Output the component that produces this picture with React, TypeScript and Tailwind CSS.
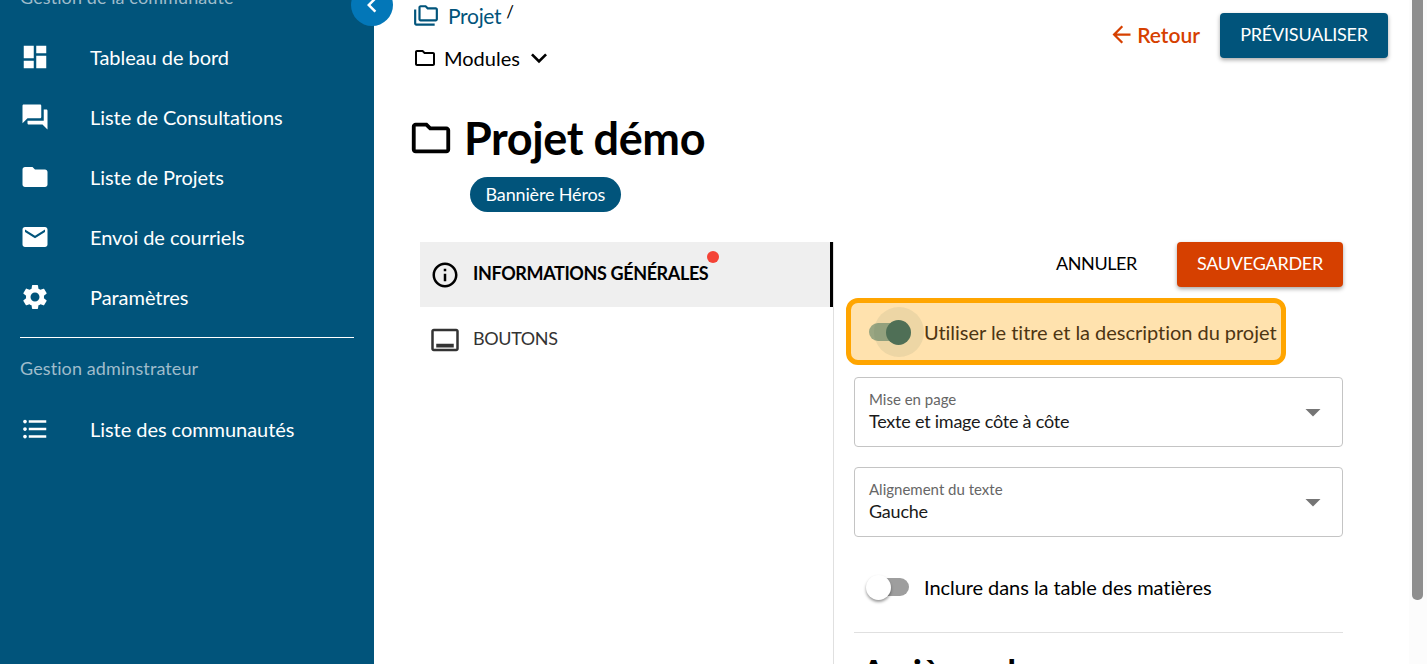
import type { ReactNode } from 'react';

const P = {
  dashboard: 'M3 13h8V3H3v10zm0 8h8v-6H3v6zm10 0h8V11h-8v10zm0-18v6h8V3h-8z',
  forum: 'M21 6h-2v9H6v2c0 .55.45 1 1 1h11l4 4V7c0-.55-.45-1-1-1zm-4 6V3c0-.55-.45-1-1-1H3c-.55 0-1 .45-1 1v14l4-4h10c.55 0 1-.45 1-1z',
  folder: 'M10 4H4c-1.1 0-1.99.9-1.99 2L2 18c0 1.1.9 2 2 2h16c1.1 0 2-.9 2-2V8c0-1.1-.9-2-2-2h-8l-2-2z',
  email: 'M20 4H4c-1.1 0-1.99.9-1.99 2L2 18c0 1.1.9 2 2 2h16c1.1 0 2-.9 2-2V6c0-1.1-.9-2-2-2zm0 4l-8 5-8-5V6l8 5 8-5v2z',
  settings: 'M19.14 12.94c.04-.3.06-.61.06-.94 0-.32-.02-.64-.07-.94l2.03-1.58c.18-.14.23-.41.12-.61l-1.92-3.32c-.12-.22-.37-.29-.59-.22l-2.39.96c-.5-.38-1.03-.7-1.62-.94l-.36-2.54c-.04-.24-.24-.41-.48-.41h-3.84c-.24 0-.43.17-.47.41l-.36 2.54c-.59.24-1.13.57-1.62.94l-2.39-.96c-.22-.08-.47 0-.59.22L2.74 8.87c-.12.21-.08.47.12.61l2.03 1.58c-.05.3-.09.63-.09.94s.02.64.07.94l-2.03 1.58c-.18.14-.23.41-.12.61l1.92 3.32c.12.22.37.29.59.22l2.39-.96c.5.38 1.03.7 1.62.94l.36 2.54c.05.24.24.41.48.41h3.84c.24 0 .44-.17.47-.41l.36-2.54c.59-.24 1.13-.56 1.62-.94l2.39.96c.22.08.47 0 .59-.22l1.92-3.32c.12-.22.07-.47-.12-.61l-2.01-1.58zM12 15.6c-1.98 0-3.6-1.62-3.6-3.6s1.62-3.6 3.6-3.6 3.6 1.62 3.6 3.6-1.62 3.6-3.6 3.6z',
  list: 'M4 10.5c-.83 0-1.5.67-1.5 1.5s.67 1.5 1.5 1.5 1.5-.67 1.5-1.5-.67-1.5-1.5-1.5zm0-6c-.83 0-1.5.67-1.5 1.5S3.17 7.5 4 7.5 5.5 6.83 5.5 6 4.83 4.5 4 4.5zm0 12c-.83 0-1.5.68-1.5 1.5s.68 1.5 1.5 1.5 1.5-.68 1.5-1.5-.67-1.5-1.5-1.5zM7 19h14v-2H7v2zm0-6h14v-2H7v2zm0-8v2h14V5H7z',
  folderOutline: 'M9.17 6l2 2H20v10H4V6h5.17M10 4H4c-1.1 0-1.99.9-1.99 2L2 18c0 1.1.9 2 2 2h16c1.1 0 2-.9 2-2V8c0-1.1-.9-2-2-2h-8l-2-2z',
  folderCopy: 'M3 19h17v2H3c-1.1 0-2-.9-2-2V6h2v13zM23 6v9c0 1.1-.9 2-2 2H7c-1.1 0-2-.9-2-2l.01-11C5.01 2.9 5.9 2 7 2h5l2 2h7c1.1 0 2 .9 2 2zM7 15h14V6h-7.83l-2-2H7v11z',
  info: 'M11 7h2v2h-2zm0 4h2v6h-2zm1-9C6.48 2 2 6.48 2 12s4.48 10 10 10 10-4.48 10-10S17.52 2 12 2zm0 18c-4.41 0-8-3.59-8-8s3.59-8 8-8 8 3.59 8 8-3.59 8-8 8z',
  callToAction: 'M21 3H3c-1.1 0-2 .9-2 2v14c0 1.1.9 2 2 2h18c1.1 0 2-.9 2-2V5c0-1.1-.9-2-2-2zm0 16H3V5h18v14zM5 15h14v3H5z',
  arrowBack: 'M20 11H7.83l5.59-5.59L12 4l-8 8 8 8 1.41-1.41L7.83 13H20v-2z',
  expand: 'M16.59 8.59L12 13.17 7.41 8.59 6 10l6 6 6-6z',
  chevronLeft: 'M15.41 7.41L14 6l-6 6 6 6 1.41-1.41L10.83 12z',
  dropDown: 'M7 10l5 5 5-5z',
};

function Icon({ d, className }: { d: string; className: string }) {
  return (
    <svg viewBox="0 0 24 24" fill="currentColor" className={className}>
      <path d={d} />
    </svg>
  );
}

function NavItem({ icon, label }: { icon: string; label: string }) {
  return (
    <div className="flex items-center h-[60px] pl-[20px]">
      <Icon d={icon} className="w-[30px] h-[30px] text-white" />
      <span className="ml-[40px] text-[20px] tracking-[-0.05px] text-white">{label}</span>
    </div>
  );
}

function Select({ label, value }: { label: string; value: string }) {
  return (
    <div className="flex items-center justify-between h-[70px] rounded border border-[#c4c4c4] pl-[14px] pr-[11px]">
      <div className="flex flex-col pb-[2px]">
        <span className="text-[15px] leading-[20px] text-[#666]">{label}</span>
        <span className="text-[18px] leading-[24px] tracking-[-0.23px] text-[#1a1a1a]">{value}</span>
      </div>
      <Icon d={P.dropDown} className="w-[36px] h-[36px] text-[#757575]" />
    </div>
  );
}

function Tab({ icon, active, children }: { icon: string; active?: boolean; children: ReactNode }) {
  return (
    <div className={active
      ? 'flex items-center h-[65px] pl-[10px] bg-[#efefef] border-r-[3px] border-black text-black font-bold'
      : 'flex items-center h-[65px] pl-[10px] text-[#333]'}>
      <Icon d={icon} className="w-[30px] h-[30px]" />
      <span className="relative ml-[13px] mb-[2px] text-[18px] tracking-[-0.38px]">{children}</span>
    </div>
  );
}

export default function App() {
  return (
    <div className="flex h-[664px] w-[1427px] overflow-hidden bg-white font-['Lato','Liberation_Sans',sans-serif]">
      {/* sidebar */}
      <aside className="relative w-[374px] shrink-0 bg-[#01547b]">
        <div className="-mt-[15px] pl-[20px] text-[18px] leading-[24px] tracking-[0.1px] text-[#9fbccb]">Gestion de la communauté</div>
        <div className="mt-[18px]">
          <NavItem icon={P.dashboard} label="Tableau de bord" />
          <NavItem icon={P.forum} label="Liste de Consultations" />
          <NavItem icon={P.folder} label="Liste de Projets" />
          <NavItem icon={P.email} label="Envoi de courriels" />
          <NavItem icon={P.settings} label="Paramètres" />
        </div>
        <div className="mt-[10px] ml-[20px] w-[334px] border-t border-white" />
        <div className="mt-[18px] pl-[20px] text-[18px] leading-[24px] tracking-[0.1px] text-[#9fbccb]">Gestion adminstrateur</div>
        <div className="mt-[19px]">
          <NavItem icon={P.list} label="Liste des communautés" />
        </div>
        <div className="absolute -top-[16px] left-[351px] flex h-[42px] w-[42px] items-center justify-center rounded-full bg-[#0377b8]">
          <Icon d={P.chevronLeft} className="w-[30px] h-[30px] text-white" />
        </div>
      </aside>

      {/* main */}
      <main className="relative flex-1 min-w-0">
        <div className="flex items-start justify-between pl-[39px] pr-[39px]">
          <div>
            <div className="flex items-center h-[32px] text-[#01547b]">
              <Icon d={P.folderCopy} className="w-[26px] h-[26px]" />
              <span className="ml-[9px] text-[21px] tracking-[-0.3px]">Projet</span>
              <span className="ml-[5px] -mt-[8px] text-[17px] text-black">/</span>
            </div>
            <div className="mt-[9px] flex items-center h-[34px] text-black">
              <Icon d={P.folderOutline} className="w-[24px] h-[24px]" />
              <span className="ml-[7px] text-[20px]">Modules</span>
              <Icon d={P.expand} className="ml-[3px] w-[32px] h-[32px]" />
            </div>
          </div>
          <div className="mt-[13px] flex items-center">
            <div className="-mt-[2px] flex items-center text-[#d64000]">
              <Icon d={P.arrowBack} className="w-[27px] h-[27px]" />
              <span className="ml-[2px] text-[21px] font-semibold">Retour</span>
            </div>
            <button className="ml-[20px] h-[45px] w-[168px] rounded bg-[#01547b] pb-[2px] text-[18px] tracking-[-0.2px] text-white shadow-[0_2px_4px_rgba(0,0,0,0.35)]">PRÉVISUALISER</button>
          </div>
        </div>

        <div className="mt-[33px] flex items-center pl-[34px]">
          <Icon d={P.folderOutline} className="w-[46px] h-[46px] text-black" />
          <h1 className="ml-[10px] text-[45px] leading-[60px] tracking-[-0.4px] font-bold text-black">Projet démo</h1>
        </div>
        <div className="mt-[9px] pl-[96px]">
          <span className="inline-flex h-[35px] items-center rounded-full bg-[#01547b] px-[15.5px] text-[18px] tracking-[-0.15px] text-white">Bannière Héros</span>
        </div>

        <div className="mt-[30px] ml-[46px] flex">
          <div className="w-[413px] shrink-0">
            <Tab icon={P.info} active>
              INFORMATIONS GÉNÉRALES
              <span className="absolute -top-[9px] -right-[11px] h-[12px] w-[12px] rounded-full bg-[#f44336]" />
            </Tab>
            <Tab icon={P.callToAction}>BOUTONS</Tab>
          </div>
          <div className="w-[510px] shrink-0 border-l border-[#e0e0e0] pl-[20px] h-[500px]">
            <div className="flex items-center justify-end h-[45px]">
              <span className="mb-[2px] text-[18px] tracking-[-0.4px] text-black">ANNULER</span>
              <button className="ml-[40px] h-[45px] w-[166px] rounded bg-[#d64000] pb-[2px] text-[18px] tracking-[-0.25px] text-white shadow-[0_2px_4px_rgba(0,0,0,0.35)]">SAUVEGARDER</button>
            </div>

            <div className="-ml-[8px] mt-[12px] -translate-y-px flex h-[67px] w-[440px] items-center rounded-[12px] border-[5px] border-[#ffa500] bg-[#ffe2ae] pl-[18px]">
              <div className="relative h-[18px] w-[34px] shrink-0 rounded-full bg-[#9aa682]">
                <span className="absolute -top-[16px] left-[5px] h-[50px] w-[50px] rounded-full bg-[#4f6f56]/10" />
                <span className="absolute -top-[3px] left-[17px] h-[25px] w-[25px] rounded-full bg-[#4f6f56]" />
              </div>
              <span className="ml-[21px] text-[20px] tracking-[-0.03px] whitespace-nowrap text-[#4d3513]">Utiliser le titre et la description du projet</span>
            </div>

            <div className="mt-[11px] flex flex-col gap-[20px]">
              <Select label="Mise en page" value="Texte et image côte à côte" />
              <Select label="Alignement du texte" value="Gauche" />
            </div>

            <div className="mt-[34px] flex items-center h-[32px] pl-[21px]">
              <div className="relative h-[18px] w-[34px] shrink-0 rounded-full bg-[#9e9e9e]">
                <span className="absolute -top-[3px] -left-[9px] h-[25px] w-[25px] rounded-full bg-white shadow-[0_2px_3px_rgba(0,0,0,0.4)]" />
              </div>
              <span className="ml-[15px] text-[20px] tracking-[-0.06px] text-black">Inclure dans la table des matières</span>
            </div>

            <div className="mt-[29px] border-t border-[#e0e0e0]" />
            <h2 className="mt-[12px] pl-[7px] text-[36px] font-bold text-black">Arrière-plan</h2>
          </div>
        </div>

        {/* scrollbar */}
        <div className="absolute right-0 top-0 h-full w-[18px] bg-[#fcfcfc]">
          <div className="ml-[3px] h-[600px] w-[11px] rounded-b-[5px] bg-[#8f8f8f]" />
        </div>
      </main>
    </div>
  );
}
